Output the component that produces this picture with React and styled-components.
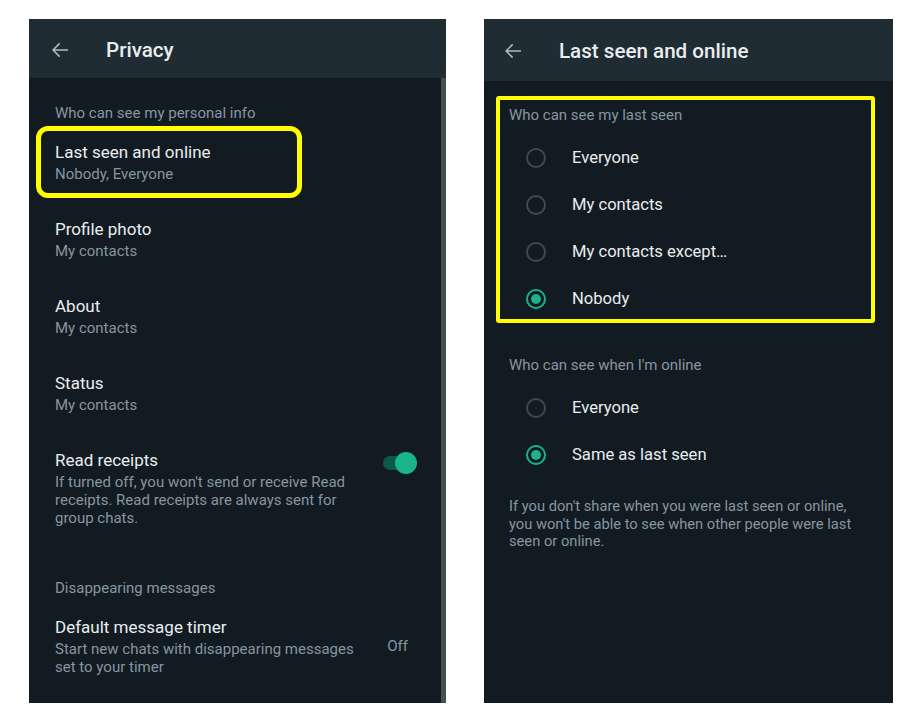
import React from 'react';
import styled, { createGlobalStyle } from 'styled-components';

const GlobalStyle = createGlobalStyle`
  body {
    margin: 0;
    background: #ffffff;
    font-family: Roboto, "Noto Sans", Arial, sans-serif;
  }
`;

const Page = styled.div`
  display: flex;
  align-items: flex-start;
  gap: 38px;
  padding: 19px 0 0 29px;
`;

const Phone = styled.div`
  width: ${(p) => p.$width}px;
  height: 684px;
  background: #121b22;
  display: flex;
  flex-direction: column;
  overflow: hidden;
`;

const Header = styled.header`
  flex-shrink: 0;
  height: ${(p) => p.$height}px;
  background: #1f2c34;
  display: flex;
  align-items: center;
  gap: 34px;
  padding-left: ${(p) => p.$pad}px;
  padding-top: 2px;
  box-sizing: border-box;
`;

const HeaderTitle = styled.h1`
  margin: 0;
  font-size: 20.6px;
  font-weight: 500;
  color: #e9edef;
`;

const Body = styled.div`
  flex: 1;
  padding-top: ${(p) => p.$top}px;
  border-right: ${(p) => (p.$scroll ? '5px solid #455055' : 'none')};
`;

const SectionLabel = styled.div`
  padding-left: ${(p) => p.$left}px;
  margin-top: ${(p) => p.$gap || 0}px;
  font-size: 15px;
  line-height: 20px;
  color: #8696a0;
`;

const Item = styled.div`
  position: relative;
  display: flex;
  align-items: flex-start;
  padding: 18px 24px 17px 26px;
`;

const ItemText = styled.div`
  width: 306px;
`;

const ItemTitle = styled.div`
  font-size: 17px;
  line-height: 22px;
  color: #e9edef;
`;

const ItemSub = styled.div`
  margin-top: 2px;
  font-size: 15px;
  line-height: 18px;
  color: #8696a0;
`;

const Highlight = styled.div`
  position: absolute;
  top: ${(p) => p.$top}px;
  left: ${(p) => p.$left}px;
  width: ${(p) => (p.$width ? `${p.$width}px` : 'auto')};
  height: ${(p) => (p.$height ? `${p.$height}px` : 'auto')};
  right: ${(p) => (p.$right !== undefined ? `${p.$right}px` : 'auto')};
  bottom: ${(p) => (p.$bottom !== undefined ? `${p.$bottom}px` : 'auto')};
  border: ${(p) => p.$border}px solid #ffff00;
  border-radius: ${(p) => p.$radius}px;
  box-sizing: border-box;
  pointer-events: none;
`;

const Toggle = styled.div`
  position: relative;
  margin-left: auto;
  margin-top: 3px;
  width: 34px;
  height: 22px;
`;

const ToggleTrack = styled.div`
  position: absolute;
  left: 0;
  top: 4px;
  width: 30px;
  height: 14px;
  border-radius: 7px;
  background: #0b5a48;
`;

const ToggleThumb = styled.div`
  position: absolute;
  right: 0;
  top: 0;
  width: 22px;
  height: 22px;
  border-radius: 50%;
  background: #1bb389;
`;

const SideValue = styled.div`
  margin-left: auto;
  margin-right: 9px;
  align-self: center;
  font-size: 15px;
  color: #8696a0;
`;

const Group = styled.div`
  position: relative;
  padding: ${(p) => p.$pad || '0'};
  margin-top: ${(p) => p.$gap || 0}px;
`;

const Options = styled.div`
  margin-top: 9px;
`;

const RadioRow = styled.label`
  display: flex;
  align-items: center;
  gap: 26px;
  height: 47px;
  padding-left: 42px;
  font-size: 16.6px;
  color: #e9edef;
`;

const RadioCircle = styled.span`
  width: 20px;
  height: 20px;
  border-radius: 50%;
  border: 2px solid ${(p) => (p.$checked ? '#1bb389' : '#3b4a54')};
  box-sizing: border-box;
  display: flex;
  align-items: center;
  justify-content: center;

  &::after {
    content: '';
    width: 10px;
    height: 10px;
    border-radius: 50%;
    background: ${(p) => (p.$checked ? '#1bb389' : 'transparent')};
  }
`;

const Note = styled.p`
  margin: 20px 0 0;
  padding: 0 30px 0 25px;
  font-size: 14.7px;
  line-height: 17.5px;
  color: #8696a0;
`;

const BackArrow = () => (
  <svg width="24" height="24" viewBox="0 0 24 24" fill="#aebac1">
    <path d="M20 11.2H6.9l5.3-5.3L11.1 4.8 4 12l7.1 7.2 1.1-1.1-5.3-5.3H20z" />
  </svg>
);

const Radio = ({ label, checked }) => (
  <RadioRow>
    <RadioCircle $checked={checked} />
    {label}
  </RadioRow>
);

const privacyItems = [
  { title: 'Profile photo', sub: 'My contacts' },
  { title: 'About', sub: 'My contacts' },
  { title: 'Status', sub: 'My contacts' },
];

const App = () => (
  <>
    <GlobalStyle />
    <Page>
      <Phone $width={417}>
        <Header $height={59} $pad={19}>
          <BackArrow />
          <HeaderTitle>Privacy</HeaderTitle>
        </Header>
        <Body $top={25} $scroll>
          <SectionLabel $left={26}>Who can see my personal info</SectionLabel>
          <Item>
            <ItemText>
              <ItemTitle>Last seen and online</ItemTitle>
              <ItemSub>Nobody, Everyone</ItemSub>
            </ItemText>
            <Highlight $top={3} $left={7} $width={266} $height={72} $border={5} $radius={12} />
          </Item>
          {privacyItems.map((item) => (
            <Item key={item.title}>
              <ItemText>
                <ItemTitle>{item.title}</ItemTitle>
                <ItemSub>{item.sub}</ItemSub>
              </ItemText>
            </Item>
          ))}
          <Item>
            <ItemText>
              <ItemTitle>Read receipts</ItemTitle>
              <ItemSub>
                If turned off, you won't send or receive Read receipts. Read receipts are always sent for group chats.
              </ItemSub>
            </ItemText>
            <Toggle>
              <ToggleTrack />
              <ToggleThumb />
            </Toggle>
          </Item>
          <SectionLabel $left={26} $gap={34}>Disappearing messages</SectionLabel>
          <Item>
            <ItemText>
              <ItemTitle>Default message timer</ItemTitle>
              <ItemSub>Start new chats with disappearing messages set to your timer</ItemSub>
            </ItemText>
            <SideValue>Off</SideValue>
          </Item>
        </Body>
      </Phone>

      <Phone $width={409}>
        <Header $height={62} $pad={17}>
          <BackArrow />
          <HeaderTitle>Last seen and online</HeaderTitle>
        </Header>
        <Body $top={15}>
          <Group $pad="9px 0 1px">
            <SectionLabel $left={25}>Who can see my last seen</SectionLabel>
            <Options>
              <Radio label="Everyone" />
              <Radio label="My contacts" />
              <Radio label="My contacts except…" />
              <Radio label="Nobody" checked />
            </Options>
            <Highlight $top={0} $left={12} $right={18} $bottom={0} $border={4} $radius={3} />
          </Group>
          <Group $gap={32}>
            <SectionLabel $left={25}>Who can see when I'm online</SectionLabel>
            <Options>
              <Radio label="Everyone" />
              <Radio label="Same as last seen" checked />
            </Options>
          </Group>
          <Note>
            If you don't share when you were last seen or online, you won't be able to see when other people were last seen or online.
          </Note>
        </Body>
      </Phone>
    </Page>
  </>
);

export default App;
